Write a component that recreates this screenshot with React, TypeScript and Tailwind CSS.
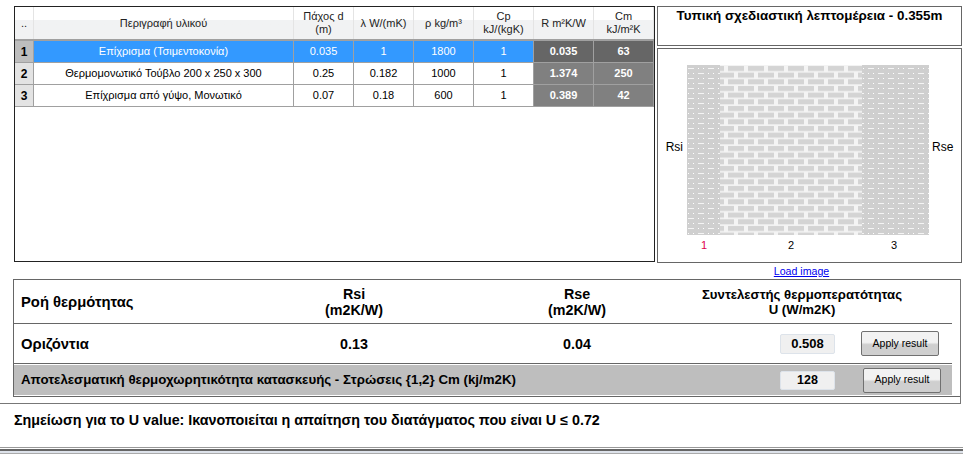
const rows = [
  { n: 1, name: 'Επίχρισμα (Τσιμεντοκονία)', d: '0.035', l: '1', p: '1800', cp: '1', r: '0.035', cm: '63' },
  { n: 2, name: 'Θερμομονωτικό Τούβλο 200 x 250 x 300', d: '0.25', l: '0.182', p: '1000', cp: '1', r: '1.374', cm: '250' },
  { n: 3, name: 'Επίχρισμα από γύψο, Μονωτικό', d: '0.07', l: '0.18', p: '600', cp: '1', r: '0.389', cm: '42' },
]

const heads = [
  { label: '..', w: 'w-[19px]' },
  { label: 'Περιγραφή υλικού', w: 'w-[260px]' },
  { label: 'Πάχος d\n(m)', w: 'w-[60px]' },
  { label: 'λ W/(mK)', w: 'w-[60px]' },
  { label: 'ρ kg/m³', w: 'w-[60px]' },
  { label: 'Cp\nkJ/(kgK)', w: 'w-[60px]' },
  { label: 'R m²K/W', w: 'w-[60px]' },
  { label: 'Cm\nkJ/m²K', w: 'w-[60px]' },
]

function Grid() {
  return (
    <div className="h-[256px] w-[641px] border border-[#222] bg-white">
      <div className="flex h-[34px] border-b-2 border-[#a0a0a0]">
        {heads.map((h) => (
          <div
            key={h.label}
            className={`${h.w} flex items-center justify-center border-r border-[#e4e4e4] bg-gradient-to-b from-white from-40% to-[#f1f2f3] to-40% text-center text-[11px] leading-[13px] whitespace-pre-line text-[#222]`}
          >
            {h.label}
          </div>
        ))}
      </div>
      {rows.map((row) => {
        const sel = row.n === 1
        const cell = `flex w-[60px] items-center justify-center border-r border-[#a0a0a0] text-[11px] ${sel ? 'bg-[#3399ff] text-white' : 'text-black'}`
        const dark = `flex w-[60px] items-center justify-center border-r border-[#a0a0a0] text-[11px] font-bold text-white ${sel ? 'bg-[#666666]' : 'bg-[#808080]'}`
        return (
          <div key={row.n} className="flex h-[22px] border-b border-[#a0a0a0]">
            <div className={`flex w-[19px] items-center justify-center border-r border-[#a0a0a0] text-[12px] font-bold text-black ${sel ? 'bg-[#bdbdbd]' : 'bg-[#e3e3e3]'}`}>
              {row.n}
            </div>
            <div className={`flex w-[260px] items-center justify-center border-r border-[#a0a0a0] text-[11px] ${sel ? 'bg-[#3399ff] text-white' : 'text-black'}`}>{row.name}</div>
            <div className={cell}>{row.d}</div>
            <div className={cell}>{row.l}</div>
            <div className={cell}>{row.p}</div>
            <div className={cell}>{row.cp}</div>
            <div className={dark}>{row.r}</div>
            <div className={dark}>{row.cm}</div>
          </div>
        )
      })}
    </div>
  )
}

function WallDrawing() {
  return (
    <svg width="242" height="170" viewBox="0 0 242 170" className="block">
      <defs>
        <pattern id="plaster" width="20" height="10" patternUnits="userSpaceOnUse">
          <rect width="20" height="10" fill="#cfcfcf" />
          <rect x="1" y="3" width="6" height="1" fill="#f4f4f4" />
          <rect x="11" y="3" width="1" height="1" fill="#ffffff" />
          <rect x="16" y="3" width="1" height="1" fill="#ffffff" />
          <rect x="11" y="8" width="6" height="1" fill="#f4f4f4" />
          <rect x="1" y="8" width="1" height="1" fill="#ffffff" />
          <rect x="6" y="8" width="1" height="1" fill="#ffffff" />
        </pattern>
        <pattern id="brick" width="20" height="13.33" patternUnits="userSpaceOnUse">
          <rect width="20" height="13.33" fill="#f4f4f4" />
          <rect x="1" y="1" width="16" height="5" fill="#d4d4d4" />
          <rect x="0" y="7.67" width="7" height="5" fill="#d4d4d4" />
          <rect x="11" y="7.67" width="9" height="5" fill="#d4d4d4" />
        </pattern>
      </defs>
      <rect width="33" height="170" fill="url(#plaster)" />
      <rect x="33" width="142" height="170" fill="url(#brick)" />
      <rect x="175" width="67" height="170" fill="url(#plaster)" />
    </svg>
  )
}

function Detail() {
  return (
    <div className="ml-[2px] flex w-[305px] flex-col">
      <div className="h-[40px] border border-[#666] text-center text-[13.4px] leading-[18px] font-bold text-black">
        Τυπική σχεδιαστική λεπτομέρεια - 0.355m
      </div>
      <div className="mt-[2px] flex h-[215px] flex-col border border-[#666]">
        <div className="mt-[16px] flex">
          <div className="flex w-[29px] items-center justify-end pr-[4px] pb-[6px] text-[12px] text-black">Rsi</div>
          <WallDrawing />
          <div className="flex flex-1 items-center pb-[6px] pl-[3px] text-[12px] text-black">Rse</div>
        </div>
        <div className="relative mt-[3px] h-[14px] text-[11px] leading-[14px] text-black">
          <span className="absolute left-[43px] text-[#e0004d]">1</span>
          <span className="absolute left-[130px]">2</span>
          <span className="absolute left-[233px]">3</span>
        </div>
      </div>
      <a href="#" className="mt-[1px] pr-[16px] text-center text-[10.6px] leading-[14px] text-[#0000ee] underline">
        Load image
      </a>
    </div>
  )
}

function ApplyButton({ className }: { className?: string }) {
  return (
    <button className={`h-[25px] w-[78px] rounded-[2px] border border-[#707070] bg-gradient-to-b from-[#f2f2f2] from-45% to-[#cfcfcf] to-55% text-[10.5px] font-normal text-black ${className ?? ''}`}>
      Apply result
    </button>
  )
}

function Results() {
  return (
    <div className="mt-[1px] mr-[2px] border-r border-b border-[#777] pb-[6px] pl-[13px]">
      <div className="border border-r-0 border-[#666] pr-[8px] font-bold text-black">
        <div className="flex h-[44px] items-center border-b border-[#666] leading-[16px]">
          <div className="w-[235px] pl-[7px] text-[14.8px]">Ροή θερμότητας</div>
          <div className="w-[210px] text-center text-[14.3px]">Rsi<br />(m2K/W)</div>
          <div className="w-[236px] text-center text-[14.3px]">Rse<br />(m2K/W)</div>
          <div className="w-[214px] text-center text-[13.2px] leading-[15px]">Συντελεστής θερμοπερατότητας<br />U (W/m2K)</div>
        </div>
        <div className="flex h-[40px] items-center border-b border-[#666]">
          <div className="w-[235px] pt-[1px] pl-[7px] text-[14.8px]">Οριζόντια</div>
          <div className="w-[210px] pt-[3px] text-center text-[14.3px]">0.13</div>
          <div className="w-[236px] pt-[3px] text-center text-[14.3px]">0.04</div>
          <div className="ml-[85px] flex h-[20px] w-[55px] items-center justify-center rounded-[2px] border border-[#dde3ea] bg-[#f0f0f0] text-[13px]">0.508</div>
          <ApplyButton className="ml-[26px]" />
        </div>
        <div className="mt-[1px] mb-[1px] flex h-[30px] items-center bg-[#bebebe]">
          <div className="w-[766px] pl-[7px] text-[13.3px]">Αποτελεσματική θερμοχωρητικότητα κατασκευής - Στρώσεις {'{1,2}'} Cm (kj/m2K)</div>
          <div className="flex h-[19px] w-[55px] items-center justify-center rounded-[2px] border border-[#dde3ea] bg-[#f0f0f0] text-[12.5px]">128</div>
          <ApplyButton className="ml-[28px]" />
        </div>
      </div>
    </div>
  )
}

export default function App() {
  return (
    <div className="h-[456px] w-[963px] overflow-hidden bg-white font-['Liberation_Sans',sans-serif]">
      <div className="flex pt-[6px] pl-[14px]">
        <Grid />
        <Detail />
      </div>
      <Results />
      <div className="h-[43px] pt-[7px] pl-[14px] text-[14.3px] leading-[18px] font-bold text-black">
        Σημείωση για το U value: Ικανοποιείται η απαίτηση του διατάγματος που είναι U ≤ 0.72
      </div>
      <div className="border-t border-[#999]" />
      <div className="mt-[1px] h-[2px] bg-[#666]" />
      <div className="h-[2px] bg-[#dde2ea]" />
      <div className="border-t border-[#aaa]" />
    </div>
  )
}
